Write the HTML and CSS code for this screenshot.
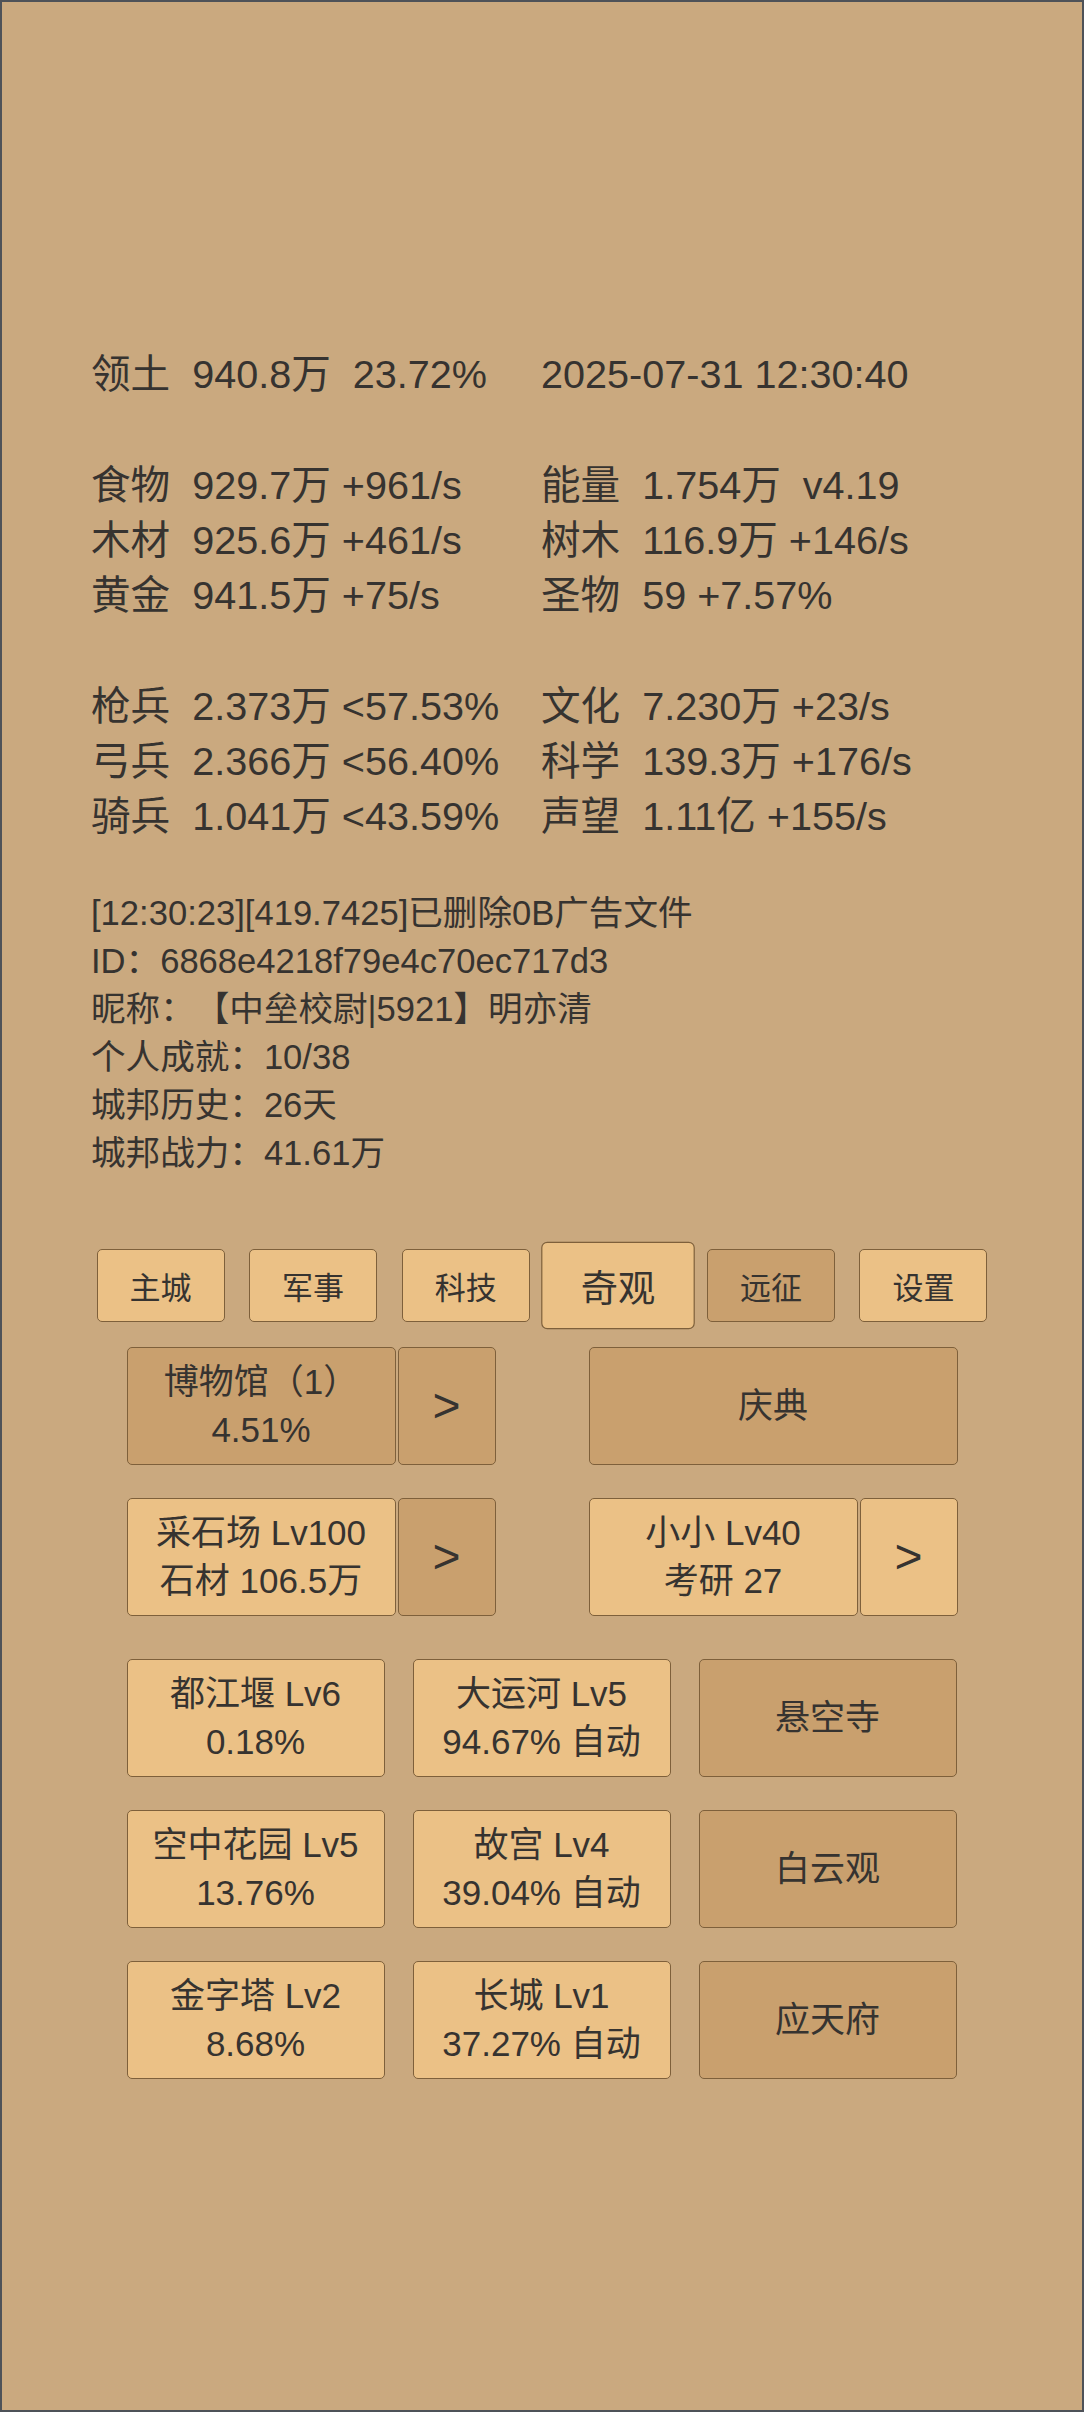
FILE: index.html
```html
<!DOCTYPE html>
<html lang="zh-CN">
<head>
<meta charset="utf-8">
<title>城邦</title>
<link rel="stylesheet" href="styles.css">
</head>
<body>
<div class="page">
  <section class="stats">
    <div class="row"><span>领土  940.8万  23.72%</span><span>2025-07-31 12:30:40</span></div>
    <div class="blank"></div>
    <div class="row"><span>食物  929.7万 +961/s</span><span>能量  1.754万  v4.19</span></div>
    <div class="row"><span>木材  925.6万 +461/s</span><span>树木  116.9万 +146/s</span></div>
    <div class="row"><span>黄金  941.5万 +75/s</span><span>圣物  59 +7.57%</span></div>
    <div class="blank"></div>
    <div class="row"><span>枪兵  2.373万 &lt;57.53%</span><span>文化  7.230万 +23/s</span></div>
    <div class="row"><span>弓兵  2.366万 &lt;56.40%</span><span>科学  139.3万 +176/s</span></div>
    <div class="row"><span>骑兵  1.041万 &lt;43.59%</span><span>声望  1.11亿 +155/s</span></div>
  </section>

  <section class="log">
    <div>[12:30:23][419.7425]已删除0B广告文件</div>
    <div>ID：6868e4218f79e4c70ec717d3</div>
    <div>昵称：【中垒校尉|5921】明亦清</div>
    <div>个人成就：10/38</div>
    <div>城邦历史：26天</div>
    <div>城邦战力：41.61万</div>
  </section>

  <nav class="tabs">
    <div class="tab">主城</div>
    <div class="tab">军事</div>
    <div class="tab">科技</div>
    <div class="tab active">奇观</div>
    <div class="tab dark">远征</div>
    <div class="tab">设置</div>
  </nav>

  <section class="wonders">
    <div class="pair-row">
      <div class="group">
        <div class="btn dark main"><span>博物馆（1）</span><span>4.51%</span></div>
        <div class="btn dark arrow">&gt;</div>
      </div>
      <div class="group">
        <div class="btn dark main"><span>庆典</span></div>
      </div>
    </div>
    <div class="pair-row">
      <div class="group">
        <div class="btn main"><span>采石场 Lv100</span><span>石材 106.5万</span></div>
        <div class="btn dark arrow">&gt;</div>
      </div>
      <div class="group">
        <div class="btn main"><span>小小 Lv40</span><span>考研 27</span></div>
        <div class="btn arrow">&gt;</div>
      </div>
    </div>

    <div class="grid3">
      <div class="btn"><span>都江堰 Lv6</span><span>0.18%</span></div>
      <div class="btn"><span>大运河 Lv5</span><span>94.67% 自动</span></div>
      <div class="btn dark"><span>悬空寺</span></div>
      <div class="btn"><span>空中花园 Lv5</span><span>13.76%</span></div>
      <div class="btn"><span>故宫 Lv4</span><span>39.04% 自动</span></div>
      <div class="btn dark"><span>白云观</span></div>
      <div class="btn"><span>金字塔 Lv2</span><span>8.68%</span></div>
      <div class="btn"><span>长城 Lv1</span><span>37.27% 自动</span></div>
      <div class="btn dark"><span>应天府</span></div>
    </div>
  </section>
</div>
</body>
</html>
```

FILE: styles.css
```css
html, body {
  margin: 0;
  padding: 0;
}

body {
  background: #caa97f;
  color: #363330;
  font-family: "Liberation Sans", "Noto Sans CJK SC", sans-serif;
  text-spacing-trim: space-all;
}

.page {
  box-sizing: border-box;
  height: 2412px;
  border: 2px solid #4e5258;
  overflow: hidden;
}

.stats {
  padding: 345px 0 0 89px;
  font-size: 39.6px;
  line-height: 55.3px;
}

.row {
  display: grid;
  grid-template-columns: 450px auto;
  white-space: pre;
  height: 55.3px;
}

.blank {
  height: 55.3px;
}

.log {
  margin-top: 44px;
  padding-left: 89px;
  font-size: 34.6px;
  line-height: 48px;
}

.tabs {
  display: flex;
  justify-content: center;
  gap: 24.6px;
  margin-top: 72px;
}

.tab {
  box-sizing: border-box;
  width: 128px;
  height: 73px;
  border: 1.5px solid #7e603b;
  border-radius: 5px;
  background: #ebc186;
  display: flex;
  align-items: center;
  justify-content: center;
  font-size: 31px;
}

.tab.dark {
  background: #c9a06e;
}

.tab.active {
  transform: scale(1.2);
}

.wonders {
  width: 831px;
  margin: 25px auto 0;
}

.pair-row {
  display: grid;
  grid-template-columns: 369px 369px;
  column-gap: 93px;
  margin-bottom: 33px;
}

.group {
  display: flex;
  gap: 2px;
}

.btn {
  box-sizing: border-box;
  height: 118px;
  border: 1.5px solid #7e603b;
  border-radius: 5px;
  background: #ebc186;
  display: flex;
  flex-direction: column;
  align-items: center;
  justify-content: center;
  font-size: 35px;
  line-height: 48px;
  text-align: center;
  white-space: nowrap;
}

.btn.dark {
  background: #c9a06e;
}

.main {
  flex: 1;
}

.arrow {
  width: 98px;
  font-size: 48px;
}

.grid3 {
  display: grid;
  grid-template-columns: repeat(3, 258px);
  column-gap: 28px;
  row-gap: 33px;
  margin-top: 43px;
}
```
